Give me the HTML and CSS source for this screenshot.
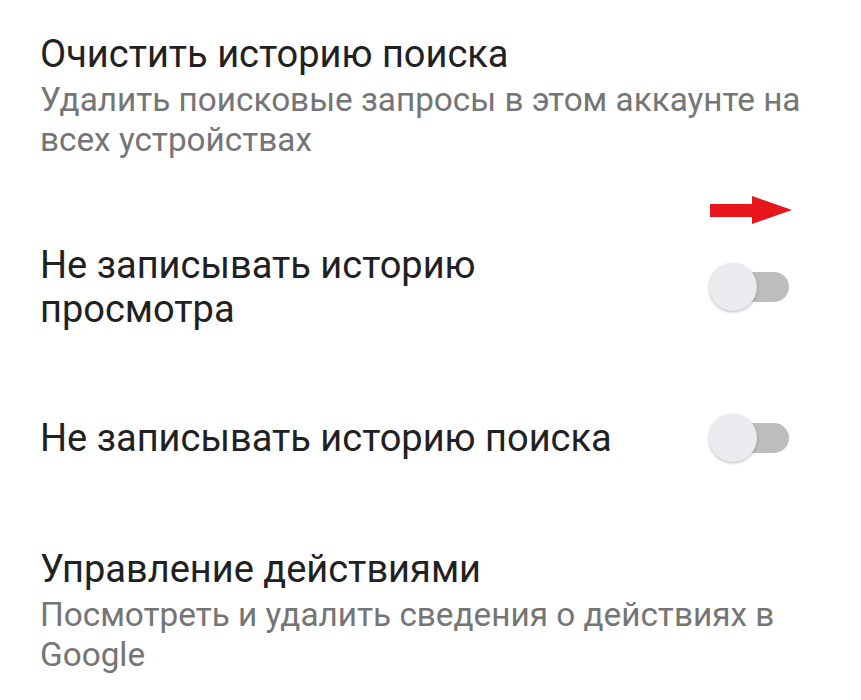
FILE: index.html
```html
<!DOCTYPE html>
<html lang="ru">
<head>
<meta charset="utf-8">
<link rel="stylesheet" href="styles.css">
</head>
<body>
<div class="list">
  <div class="item item-first">
    <div class="text">
      <div class="title">Очистить историю поиска</div>
      <div class="summary">Удалить поисковые запросы в этом аккаунте на всех устройствах</div>
    </div>
  </div>
  <div class="arrow-row">
    <svg class="arrow" width="82" height="28" viewBox="0 0 82 28"><polygon points="0,8 42,8 42,0 82,14 42,28 42,21 0,21" fill="#e8151b"/></svg>
  </div>
  <div class="item">
    <div class="text">
      <div class="title">Не записывать историю<br>просмотра</div>
    </div>
    <div class="switch"><div class="track"></div><div class="thumb"></div></div>
  </div>
  <div class="item item-toggle2">
    <div class="text">
      <div class="title">Не записывать историю поиска</div>
    </div>
    <div class="switch"><div class="track"></div><div class="thumb"></div></div>
  </div>
  <div class="item item-last">
    <div class="text">
      <div class="title">Управление действиями</div>
      <div class="summary">Посмотреть и удалить сведения о действиях в Google</div>
    </div>
  </div>
</div>
</body>
</html>
```
FILE: styles.css
```css
html, body { margin: 0; padding: 0; background: #fff; }
body { width: 861px; height: 700px; overflow: hidden; font-family: Roboto, "Noto Sans", sans-serif; }
.list { padding: 0 40px; }
.item { display: flex; align-items: center; justify-content: space-between; }
.text { flex: 1; }
.title { font-size: 38px; line-height: 44px; color: #212121; }
.summary { font-size: 33.3px; line-height: 40px; color: #757575; width: 790px; margin-top: 4px; }
.item-first { padding-top: 32px; }
.arrow-row { display: flex; justify-content: flex-end; padding-right: 29px; padding-top: 36px; padding-bottom: 19px; }
.arrow { display: block; }
.switch { position: relative; width: 80px; height: 50px; margin-right: 32px; }
.track { position: absolute; left: 30px; top: 10px; width: 50px; height: 30px; border-radius: 15px; background: #bdbdbd; }
.thumb { position: absolute; left: 0; top: 1px; width: 48px; height: 48px; border-radius: 50%; background: #eceaee; box-shadow: 0 1px 3px rgba(0,0,0,0.28); }
.item-toggle2 { margin-top: 82px; }
.item-last { margin-top: 84px; }
```
